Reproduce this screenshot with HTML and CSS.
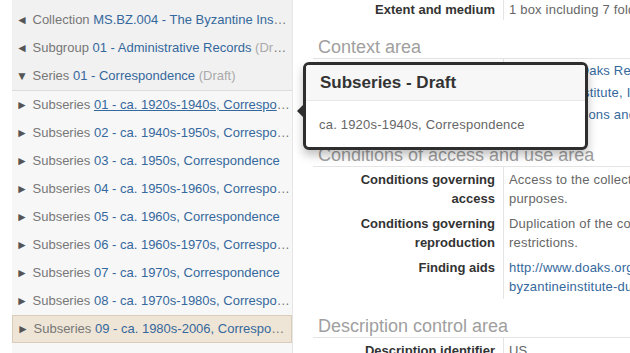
FILE: index.html
```html
<!DOCTYPE html>
<html lang="en">
<head>
    <meta charset="UTF-8">
    <title>Subseries 01 - ca. 1920s-1940s, Correspondence</title>
    <link rel="stylesheet" href="styles.css">
</head>
<body>
    <div class="page">
        <div class="sidebar">
            <ul class="ancestors">
                <li class="tree-item"><span class="arrow">&#9668;</span> Collection <a href="#">MS.BZ.004 - The Byzantine Institute and Dumbarton Oaks Fieldwork Records and Papers</a></li>
                <li class="tree-item"><span class="arrow">&#9668;</span> Subgroup <a href="#">01 - Administrative Records</a> <span class="draft">(Draft)</span></li>
                <li class="tree-item"><span class="arrow">&#9660;</span> Series <a href="#">01 - Correspondence</a> <span class="draft">(Draft)</span></li>
            </ul>
            <ul class="children">
                <li class="tree-item"><span class="arrow">&#9658;</span> Subseries <a href="#" class="hover">01 - ca. 1920s-1940s, Correspondence</a></li>
                <li class="tree-item"><span class="arrow">&#9658;</span> Subseries <a href="#">02 - ca. 1940s-1950s, Correspondence</a></li>
                <li class="tree-item"><span class="arrow">&#9658;</span> Subseries <a href="#">03 - ca. 1950s, Correspondence</a></li>
                <li class="tree-item"><span class="arrow">&#9658;</span> Subseries <a href="#">04 - ca. 1950s-1960s, Correspondence</a></li>
                <li class="tree-item"><span class="arrow">&#9658;</span> Subseries <a href="#">05 - ca. 1960s, Correspondence</a></li>
                <li class="tree-item"><span class="arrow">&#9658;</span> Subseries <a href="#">06 - ca. 1960s-1970s, Correspondence</a></li>
                <li class="tree-item"><span class="arrow">&#9658;</span> Subseries <a href="#">07 - ca. 1970s, Correspondence</a></li>
                <li class="tree-item"><span class="arrow">&#9658;</span> Subseries <a href="#">08 - ca. 1970s-1980s, Correspondence</a></li>
                <li class="tree-item active"><span class="arrow">&#9658;</span> Subseries <a href="#">09 - ca. 1980s-2006, Correspondence</a></li>
            </ul>
        </div>

        <div class="content">
            <div class="field first">
                <div class="label">Extent and medium</div>
                <div class="value">1 box including 7 folders</div>
            </div>

            <h2 class="area">Context area</h2>
            <div class="field tight">
                <div class="label">Name of creator</div>
                <div class="value"><a href="#">Dumbarton Oaks Research Library and Collection</a></div>
            </div>
            <div class="field tight">
                <div class="label">Name of creator</div>
                <div class="value"><a href="#">Byzantine Institute, Inc.</a></div>
            </div>
            <div class="field tight last">
                <div class="label">Archival history</div>
                <div class="value"><a href="#">Field expeditions and restorations</a></div>
            </div>

            <h2 class="area">Conditions of access and use area</h2>
            <div class="field">
                <div class="label">Conditions governing access</div>
                <div class="value">Access to the collection is open for research purposes.</div>
            </div>
            <div class="field">
                <div class="label">Conditions governing reproduction</div>
                <div class="value">Duplication of the collection is subject to restrictions.</div>
            </div>
            <div class="field">
                <div class="label">Finding aids</div>
                <div class="value nowrap"><a href="#">http://www.doaks.org/library-archives/icfa/<br>byzantineinstitute-dumbarton-oaks-fieldwork</a></div>
            </div>

            <h2 class="area">Description control area</h2>
            <div class="field">
                <div class="label">Description identifier</div>
                <div class="value">US</div>
            </div>
        </div>

        <div class="popover">
            <div class="popover-arrow"></div>
            <h3 class="popover-title">Subseries - Draft</h3>
            <div class="popover-body">ca. 1920s-1940s, Correspondence</div>
        </div>
    </div>
</body>
</html>
```

FILE: styles.css
```css
body {
    font-family: "Liberation Sans", Arial, sans-serif;
    font-size: 13px;
    margin: 0;
    padding: 0;
    background-color: #fff;
    color: #666;
    overflow: hidden;
}

a {
    color: #35689c;
    text-decoration: none;
}

.page {
    position: relative;
    display: flex;
    height: 353px;
    overflow: hidden;
}

/* Дерево слева */
.sidebar {
    width: 280px;
    min-width: 0;
    flex-shrink: 0;
    margin-left: 12px;
    background-color: #f7f7f7;
    border-right: 1px solid #e6e6e6;
}

.sidebar ul {
    list-style: none;
    margin: 0;
    padding: 0;
}

.sidebar .ancestors {
    background-color: #f1f1f1;
    border-bottom: 1px solid #dcdcdc;
    padding-top: 6px;
}

.tree-item {
    height: 28px;
    line-height: 28px;
    padding: 0 2px 0 4px;
    white-space: nowrap;
    overflow: hidden;
    text-overflow: ellipsis;
    color: #777;
    box-sizing: border-box;
}

.tree-item .arrow {
    font-size: 12px;
    color: #555;
    margin-right: 1px;
}

.tree-item .draft {
    color: #aaa;
}

.tree-item a.hover {
    text-decoration: underline;
}

.tree-item.active {
    background-color: #efe5d6;
    border: 1px solid #d9cdb9;
    line-height: 26px;
}

/* Описание справа */
.content {
    width: 600px;
    min-width: 0;
    flex-shrink: 0;
    margin-left: 20px;
}

.area {
    font-size: 18px;
    font-weight: normal;
    color: #a0a0a0;
    line-height: 22px;
    margin: 16px 0 0;
    padding-left: 5px;
    border-bottom: 1px solid #e4e4e4;
    white-space: nowrap;
}

.field {
    display: flex;
    line-height: 19px;
}

.field .label {
    flex: 0 0 191px;
    box-sizing: border-box;
    padding: 3px 8px 3px 30px;
    border-right: 1px solid #e4e4e4;
    text-align: right;
    font-weight: bold;
    color: #333;
}

.field .value {
    width: 290px;
    padding: 3px 0 3px 5px;
    color: #666;
    letter-spacing: 0.2px;
}

.field .value.nowrap {
    white-space: nowrap;
}

.field.first .label,
.field.first .value {
    padding-top: 0;
    padding-bottom: 1px;
    white-space: nowrap;
}

.field.tight .label,
.field.tight .value {
    padding-top: 2px;
    padding-bottom: 1px;
    white-space: nowrap;
}

.field.tight.last .label,
.field.tight.last .value {
    padding-bottom: 4px;
}

/* Всплывающая подсказка */
.popover {
    position: absolute;
    left: 303px;
    top: 62px;
    width: 285px;
    height: 88px;
    box-sizing: border-box;
    background-color: #fff;
    border: 3px solid #2e2e2e;
    border-radius: 6px;
    box-shadow: 0 5px 10px rgba(0, 0, 0, 0.25);
}

.popover-arrow {
    position: absolute;
    left: -9px;
    top: 40px;
    width: 0;
    height: 0;
    border-top: 6px solid transparent;
    border-bottom: 6px solid transparent;
    border-right: 6px solid #2e2e2e;
}

.popover-title {
    margin: 0;
    height: 36px;
    line-height: 36px;
    padding: 0 14px;
    font-size: 17px;
    font-weight: bold;
    color: #333;
    background-color: #f7f7f7;
    border-bottom: 1px solid #e8e8e8;
    border-radius: 3px 3px 0 0;
    box-sizing: border-box;
}

.popover-body {
    padding: 14px 13px 12px;
    line-height: 20px;
    color: #666;
    letter-spacing: 0.2px;
}
```
